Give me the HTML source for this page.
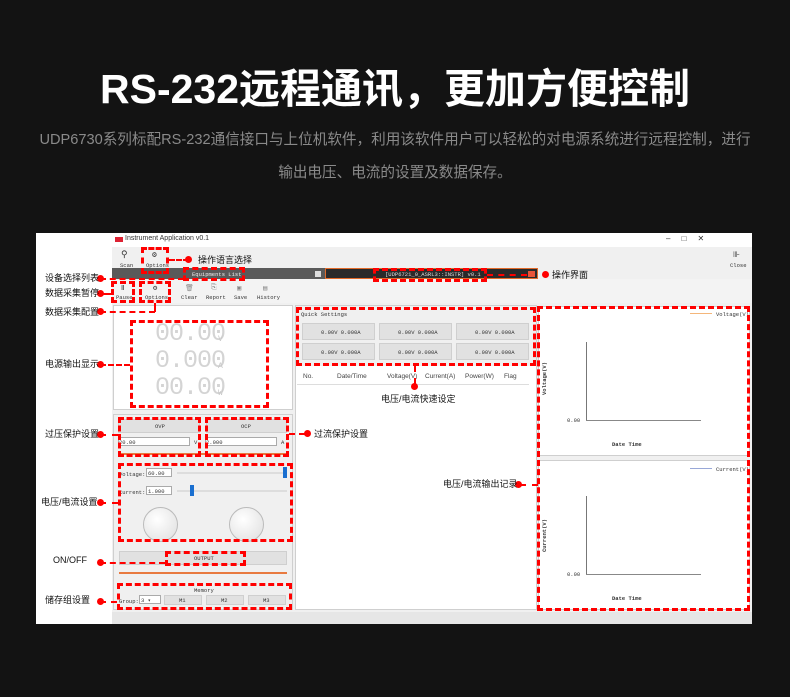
<!DOCTYPE html>
<html><head><meta charset="utf-8">
<style>
*{margin:0;padding:0;box-sizing:border-box}
body{width:790px;height:697px;background:#131313;position:relative;overflow:hidden;font-family:"Liberation Sans","Noto Sans CJK SC",sans-serif}
.a{position:absolute;white-space:nowrap}
.t{color:#fff;font-size:41px;font-weight:bold;left:0;width:790px;text-align:center;top:55px;font-family:"Liberation Sans","Noto Sans CJK SC",sans-serif}
.s{color:#8a8a8a;font-size:14.6px;left:0;width:790px;text-align:center}
.win{left:36px;top:233px;width:716px;height:391px;background:#fff}
.d{position:absolute;border:3px dashed #f00}
.lb{position:absolute;font-size:9px;color:#111;white-space:nowrap;font-family:"Liberation Sans","Noto Sans CJK SC",sans-serif}
.dot{position:absolute;width:7px;height:7px;border-radius:50%;background:#f00}
.hl{position:absolute;border-top:2px dashed #f00;height:0}
.vl{position:absolute;border-left:2px dashed #f00;width:0}
.m{font-family:"Liberation Mono",monospace;font-size:5.5px;color:#333;position:absolute;white-space:nowrap}
.btn{position:absolute;background:#e1e1e1;border:1px solid #cfcfcf}
.pn{position:absolute;border:1px solid #cfcfcf}
.dg{position:absolute;font-family:"Liberation Mono",monospace;color:#d4d4d4;font-size:25px;white-space:nowrap;letter-spacing:-1px}
.u{position:absolute;color:#c8c8c8;font-size:8px;font-family:"Liberation Mono",monospace}
.in{position:absolute;background:#fff;border:1px solid #aaa;height:9px}
</style></head><body>
<div class="a t">RS-232远程通讯，更加方便控制</div>
<div class="a s" style="top:128px">UDP6730系列标配RS-232通信接口与上位机软件，利用该软件用户可以轻松的对电源系统进行远程控制，进行</div>
<div class="a s" style="top:161px">输出电压、电流的设置及数据保存。</div>

<div class="a win"></div>
<div class="a" style="left:112px;top:233px;width:640px;height:391px;background:#f0f0f0"></div>
<div class="a" style="left:112px;top:233px;width:640px;height:14px;background:#fff"></div>
<div class="a" style="left:115px;top:237px;width:8px;height:5px;background:#d23"></div>
<div class="a" style="left:125px;top:235px;font-size:7px;color:#333">Instrument Application v0.1</div>
<div class="a" style="left:666px;top:234px;font-size:8px;color:#333">–&nbsp;&nbsp;&nbsp;&nbsp;&nbsp;□&nbsp;&nbsp;&nbsp;&nbsp;&nbsp;✕</div>
<div class="m" style="left:121px;top:250px;font-size:9px">⚲</div>
<div class="m" style="left:120px;top:262px">Scan</div>
<div class="m" style="left:152px;top:250px;font-size:8px">⚙</div>
<div class="m" style="left:146px;top:262px">Options</div>
<div class="m" style="left:733px;top:250px;font-size:8px">⊪</div>
<div class="m" style="left:730px;top:262px">Close</div>
<div class="a" style="left:112px;top:268px;width:213px;height:11px;background:#5a5a5a"></div>
<div class="a" style="left:315px;top:271px;width:6px;height:6px;background:#ddd"></div>
<div class="a" style="left:325px;top:268px;width:213px;height:11px;background:#2a2a2a;border:1px solid #e06a2a"></div>
<div class="m" style="left:192px;top:271px;color:#eee">Equipments List</div>
<div class="m" style="left:385px;top:271px;color:#ddd">[UDP6721_0_ASRL3::INSTR] v0.1</div>
<div class="a" style="left:528px;top:271px;width:7px;height:6px;background:#e8553a"></div>
<div class="a" style="left:112px;top:279px;width:640px;height:24px;background:#f3f3f3"></div>
<div class="m" style="left:121px;top:284px;font-size:7px">Ⅱ</div>
<div class="m" style="left:116px;top:294px">Pause</div>
<div class="m" style="left:153px;top:284px;font-size:7px">⚙</div>
<div class="m" style="left:145px;top:294px">Options</div>
<div class="m" style="left:185px;top:284px;font-size:7px;color:#888">🗑</div>
<div class="m" style="left:181px;top:294px">Clear</div>
<div class="m" style="left:211px;top:284px;font-size:7px;color:#888">⎘</div>
<div class="m" style="left:206px;top:294px">Report</div>
<div class="m" style="left:237px;top:284px;font-size:7px;color:#888">▣</div>
<div class="m" style="left:234px;top:294px">Save</div>
<div class="m" style="left:263px;top:284px;font-size:7px;color:#888">▤</div>
<div class="m" style="left:257px;top:294px">History</div>
<div class="pn" style="left:113px;top:305px;width:180px;height:105px;background:#fff"></div>
<div class="dg" style="left:155px;top:319px">00.00</div><div class="u" style="left:218px;top:335px">V</div>
<div class="dg" style="left:155px;top:346px">0.000</div><div class="u" style="left:218px;top:362px">A</div>
<div class="dg" style="left:155px;top:373px">00.00</div><div class="u" style="left:218px;top:389px">W</div>
<div class="pn" style="left:113px;top:414px;width:180px;height:196px;background:#f0f0f0"></div>
<div class="btn" style="left:118px;top:419px;width:82px;height:14px"></div><div class="m" style="left:155px;top:423px">OVP</div>
<div class="btn" style="left:206px;top:419px;width:81px;height:14px"></div><div class="m" style="left:241px;top:423px">OCP</div>
<div class="in" style="left:118px;top:437px;width:72px"></div><div class="m" style="left:119px;top:439px">20.00</div><div class="m" style="left:194px;top:439px">V</div>
<div class="in" style="left:205px;top:437px;width:72px"></div><div class="m" style="left:206px;top:439px">2.000</div><div class="m" style="left:281px;top:439px">A</div>
<div class="a" style="left:119px;top:453px;width:168px;height:2px;background:#e87a40"></div>
<div class="m" style="left:119px;top:471px">Voltage:</div><div class="in" style="left:146px;top:468px;width:26px"></div><div class="m" style="left:148px;top:470px">60.00</div>
<div class="a" style="left:177px;top:472px;width:110px;height:2px;background:#ddd"></div>
<div class="a" style="left:283px;top:467px;width:4px;height:11px;background:#1a6fd0"></div>
<div class="m" style="left:119px;top:489px">Current:</div><div class="in" style="left:146px;top:486px;width:26px"></div><div class="m" style="left:148px;top:488px">1.000</div>
<div class="a" style="left:177px;top:490px;width:110px;height:2px;background:#ddd"></div>
<div class="a" style="left:190px;top:485px;width:4px;height:11px;background:#1a6fd0"></div>
<div class="a" style="left:143px;top:507px;width:35px;height:35px;border-radius:50%;background:radial-gradient(circle at 40% 35%,#fff,#ddd);border:1px solid #bbb"></div>
<div class="a" style="left:229px;top:507px;width:35px;height:35px;border-radius:50%;background:radial-gradient(circle at 40% 35%,#fff,#ddd);border:1px solid #bbb"></div>
<div class="btn" style="left:119px;top:551px;width:168px;height:14px"></div><div class="m" style="left:194px;top:555px">OUTPUT</div>
<div class="a" style="left:119px;top:572px;width:168px;height:2px;background:#e87a40"></div>
<div class="m" style="left:194px;top:587px">Memory</div>
<div class="m" style="left:119px;top:598px">Group:</div><div class="in" style="left:139px;top:595px;width:22px"></div><div class="m" style="left:141px;top:597px">3 ▾</div>
<div class="btn" style="left:164px;top:595px;width:38px;height:10px"></div><div class="m" style="left:179px;top:597px">M1</div>
<div class="btn" style="left:206px;top:595px;width:38px;height:10px"></div><div class="m" style="left:221px;top:597px">M2</div>
<div class="btn" style="left:248px;top:595px;width:38px;height:10px"></div><div class="m" style="left:263px;top:597px">M3</div>
<div class="pn" style="left:295px;top:305px;width:242px;height:305px;background:#fff"></div>
<div class="a" style="left:296px;top:306px;width:240px;height:60px;background:#f0f0f0"></div>
<div class="m" style="left:301px;top:311px">Quick Settings</div>
<div class="btn" style="left:302px;top:323px;width:73px;height:17px"></div><div class="btn" style="left:379px;top:323px;width:73px;height:17px"></div><div class="btn" style="left:456px;top:323px;width:73px;height:17px"></div>
<div class="btn" style="left:302px;top:343px;width:73px;height:17px"></div><div class="btn" style="left:379px;top:343px;width:73px;height:17px"></div><div class="btn" style="left:456px;top:343px;width:73px;height:17px"></div>
<div class="m" style="left:321px;top:329px">0.00V 0.000A</div><div class="m" style="left:398px;top:329px">0.00V 0.000A</div><div class="m" style="left:475px;top:329px">0.00V 0.000A</div>
<div class="m" style="left:321px;top:349px">0.00V 0.000A</div><div class="m" style="left:398px;top:349px">0.00V 0.000A</div><div class="m" style="left:475px;top:349px">0.00V 0.000A</div>
<div class="a" style="left:297px;top:369px;width:232px;height:16px;border-bottom:1px solid #ddd;font-size:6.5px;color:#444">
<span class="a" style="left:6px;top:4px">No.</span><span class="a" style="left:40px;top:4px">Date/Time</span><span class="a" style="left:90px;top:4px">Voltage(V)</span><span class="a" style="left:128px;top:4px">Current(A)</span><span class="a" style="left:168px;top:4px">Power(W)</span><span class="a" style="left:207px;top:4px">Flag</span></div>
<div class="pn" style="left:538px;top:306px;width:212px;height:150px;background:#fff"></div>
<div class="pn" style="left:538px;top:460px;width:212px;height:150px;background:#fff"></div>
<div class="a" style="left:690px;top:313px;width:22px;height:1px;background:#f4b67a"></div><div class="m" style="left:716px;top:311px">Voltage(V)</div>
<div class="a" style="left:690px;top:468px;width:22px;height:1px;background:#99a8d8"></div><div class="m" style="left:716px;top:466px">Current(V)</div>
<div class="a" style="left:586px;top:342px;width:1px;height:79px;background:#777"></div><div class="a" style="left:586px;top:420px;width:115px;height:1px;background:#888"></div>
<div class="m" style="left:567px;top:417px">0.00</div><div class="m" style="left:612px;top:441px;font-weight:bold">Date Time</div>
<div class="m" style="left:541px;top:395px;transform:rotate(-90deg);transform-origin:left top;font-weight:bold">Voltage(V)</div>
<div class="a" style="left:586px;top:496px;width:1px;height:79px;background:#777"></div><div class="a" style="left:586px;top:574px;width:115px;height:1px;background:#888"></div>
<div class="m" style="left:567px;top:571px">0.00</div><div class="m" style="left:612px;top:595px;font-weight:bold">Date Time</div>
<div class="m" style="left:541px;top:552px;transform:rotate(-90deg);transform-origin:left top;font-weight:bold">Current(V)</div>
<div class="a" style="left:112px;top:612px;width:640px;height:12px;background:#e6e6e6"></div>

<div class="d" style="left:141px;top:247px;width:28px;height:27px"></div>
<div class="d" style="left:183px;top:267px;width:62px;height:14px"></div>
<div class="d" style="left:373px;top:268px;width:114px;height:14px"></div>
<div class="d" style="left:111px;top:281px;width:24px;height:22px"></div>
<div class="d" style="left:139px;top:281px;width:32px;height:22px"></div>
<div class="d" style="left:130px;top:320px;width:139px;height:88px"></div>
<div class="d" style="left:118px;top:417px;width:83px;height:40px"></div>
<div class="d" style="left:205px;top:417px;width:84px;height:40px"></div>
<div class="d" style="left:118px;top:463px;width:175px;height:79px"></div>
<div class="d" style="left:165px;top:551px;width:81px;height:15px"></div>
<div class="d" style="left:117px;top:583px;width:175px;height:27px"></div>
<div class="d" style="left:296px;top:307px;width:240px;height:59px"></div>
<div class="d" style="left:537px;top:306px;width:213px;height:305px"></div>

<div class="hl" style="left:169px;top:259px;width:20px"></div><div class="dot" style="left:185px;top:256px"></div><div class="lb" style="left:198px;top:253px">操作语言选择</div>
<div class="hl" style="left:100px;top:278px;width:84px"></div><div class="dot" style="left:97px;top:275px"></div><div class="lb" style="left:45px;top:271px">设备选择列表</div>
<div class="hl" style="left:100px;top:293px;width:12px"></div><div class="dot" style="left:97px;top:290px"></div><div class="lb" style="left:45px;top:286px">数据采集暂停</div>
<div class="hl" style="left:100px;top:311px;width:55px"></div><div class="vl" style="left:154px;top:303px;height:9px"></div><div class="dot" style="left:97px;top:308px"></div><div class="lb" style="left:45px;top:305px">数据采集配置</div>
<div class="hl" style="left:100px;top:364px;width:30px"></div><div class="dot" style="left:97px;top:361px"></div><div class="lb" style="left:45px;top:357px">电源输出显示</div>
<div class="hl" style="left:100px;top:434px;width:18px"></div><div class="dot" style="left:97px;top:431px"></div><div class="lb" style="left:45px;top:427px">过压保护设置</div>
<div class="hl" style="left:100px;top:502px;width:18px"></div><div class="dot" style="left:97px;top:499px"></div><div class="lb" style="left:41px;top:495px">电压/电流设置</div>
<div class="hl" style="left:100px;top:562px;width:65px"></div><div class="dot" style="left:97px;top:559px"></div><div class="lb" style="left:53px;top:555px">ON/OFF</div>
<div class="hl" style="left:100px;top:601px;width:17px"></div><div class="dot" style="left:97px;top:598px"></div><div class="lb" style="left:45px;top:593px">储存组设置</div>
<div class="hl" style="left:289px;top:433px;width:16px"></div><div class="dot" style="left:304px;top:430px"></div><div class="lb" style="left:314px;top:427px">过流保护设置</div>
<div class="hl" style="left:487px;top:274px;width:40px"></div><div class="dot" style="left:542px;top:271px"></div><div class="lb" style="left:552px;top:268px">操作界面</div>
<div class="vl" style="left:414px;top:366px;height:18px"></div><div class="dot" style="left:411px;top:383px"></div><div class="lb" style="left:381px;top:392px">电压/电流快速设定</div>
<div class="hl" style="left:520px;top:484px;width:18px"></div><div class="dot" style="left:515px;top:481px"></div><div class="lb" style="left:443px;top:477px">电压/电流输出记录</div>
</body></html>
